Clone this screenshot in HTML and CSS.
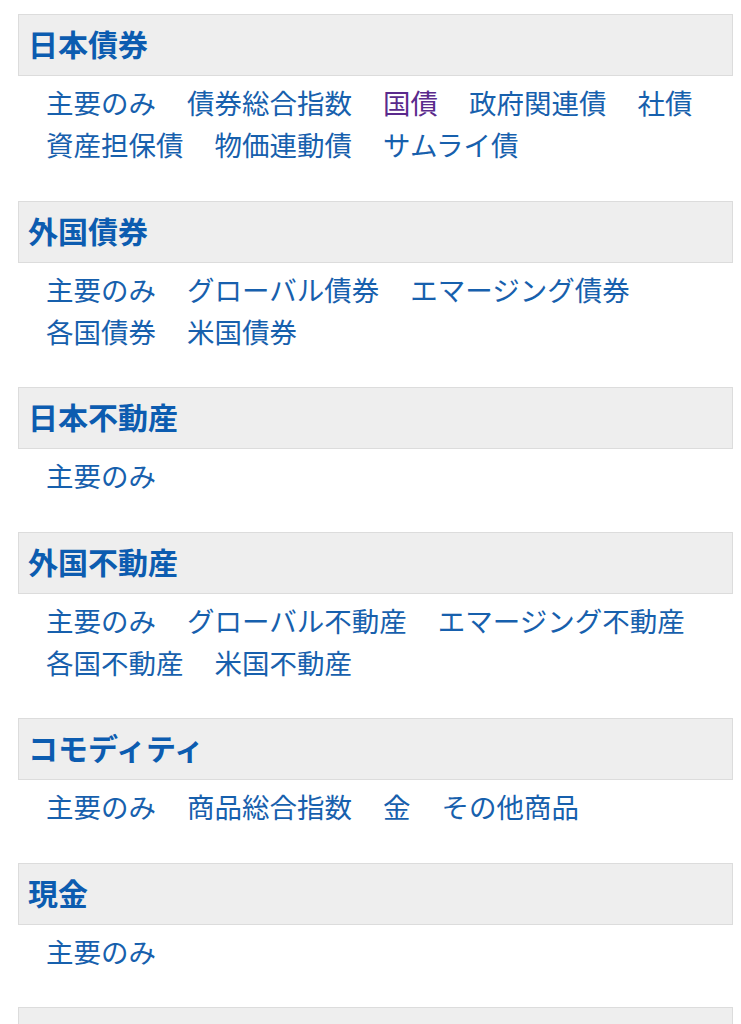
FILE: index.html
```html
<!DOCTYPE html>
<html lang="ja">
<head>
    <meta charset="UTF-8">
    <meta name="viewport" content="width=device-width, initial-scale=1.0">
    <title>資産クラス</title>
    <link rel="stylesheet" href="styles.css">
</head>
<body>
    <div class="page">
        <div class="section">
            <h2 class="section-title">日本債券</h2>
            <div class="links">
                <a href="#">主要のみ</a>
                <a href="#">債券総合指数</a>
                <a href="#" class="visited">国債</a>
                <a href="#">政府関連債</a>
                <a href="#">社債</a>
                <a href="#">資産担保債</a>
                <a href="#">物価連動債</a>
                <a href="#">サムライ債</a>
            </div>
        </div>
        <div class="section">
            <h2 class="section-title">外国債券</h2>
            <div class="links">
                <a href="#">主要のみ</a>
                <a href="#">グローバル債券</a>
                <a href="#">エマージング債券</a>
                <a href="#">各国債券</a>
                <a href="#">米国債券</a>
            </div>
        </div>
        <div class="section">
            <h2 class="section-title">日本不動産</h2>
            <div class="links">
                <a href="#">主要のみ</a>
            </div>
        </div>
        <div class="section">
            <h2 class="section-title">外国不動産</h2>
            <div class="links">
                <a href="#">主要のみ</a>
                <a href="#">グローバル不動産</a>
                <a href="#">エマージング不動産</a>
                <a href="#">各国不動産</a>
                <a href="#">米国不動産</a>
            </div>
        </div>
        <div class="section">
            <h2 class="section-title">コモディティ</h2>
            <div class="links">
                <a href="#">主要のみ</a>
                <a href="#">商品総合指数</a>
                <a href="#">金</a>
                <a href="#">その他商品</a>
            </div>
        </div>
        <div class="section">
            <h2 class="section-title">現金</h2>
            <div class="links">
                <a href="#">主要のみ</a>
            </div>
        </div>
        <div class="section">
            <h2 class="section-title"></h2>
        </div>
    </div>
</body>
</html>
```

FILE: styles.css
```css
body {
    margin: 0;
    background: #fff;
    font-family: "Noto Sans CJK JP", "Noto Sans", sans-serif;
}
.page {
    padding: 14px 8px 0 18px;
}
.section {
    margin-bottom: 35.5px;
}
.section-title {
    margin: 0;
    height: 60px;
    line-height: 57px;
    padding-left: 9px;
    background: #eeeeee;
    border: 1px solid #dcdcdc;
    color: #0c5cb0;
    font-size: 30px;
    font-weight: bold;
}
.links {
    display: flex;
    flex-wrap: wrap;
    column-gap: 31px;
    padding: 5px 0 0 28px;
}
.links a {
    font-size: 27.5px;
    line-height: 42px;
    color: #1760ad;
    text-decoration: none;
}
.links a.visited {
    color: #5a2a8c;
}
```
